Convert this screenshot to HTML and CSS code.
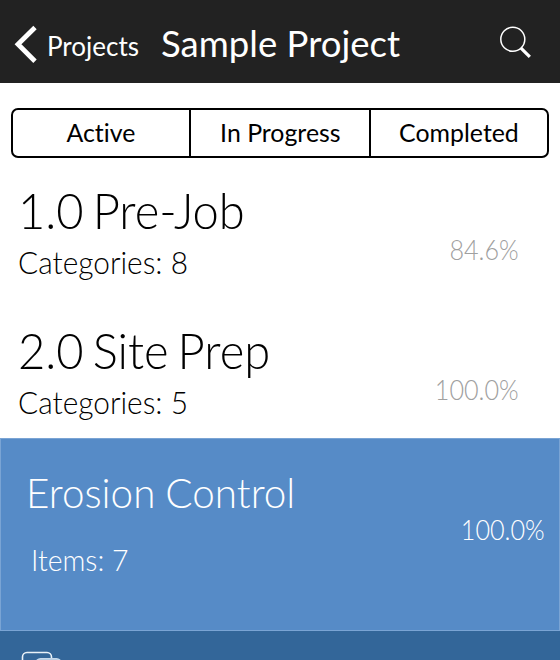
FILE: index.html
```html
<!DOCTYPE html>
<html lang="en">
<head>
<meta charset="utf-8">
<title>Sample Project</title>
<link rel="stylesheet" href="styles.css">
</head>
<body>
<header class="bar">
  <a class="back">
    <svg class="chevron" width="24" height="38" viewBox="0 0 24 38"><path d="M21 2.5 4 19.3l17 16.9" fill="none" stroke="#fff" stroke-width="4.8"/></svg>
    <span class="back-label">Projects</span>
  </a>
  <h1 class="title">Sample Project</h1>
  <svg class="search" width="34" height="34" viewBox="0 0 34 34" fill="none" stroke="#fff"><circle cx="14.8" cy="14.3" r="12" stroke-width="1.5"/><path d="m23 23.2 8.8 8.7" stroke-width="3.2"/></svg>
</header>
<nav class="segments">
  <span class="segment"><span>Active</span></span>
  <span class="segment"><span>In Progress</span></span>
  <span class="segment"><span>Completed</span></span>
</nav>
<main>
  <section class="row">
    <div>
      <h2 class="name">1.0 Pre-Job</h2>
      <p class="count">Categories: 8</p>
    </div>
    <span class="percent">84.6%</span>
  </section>
  <section class="row">
    <div>
      <h2 class="name">2.0 Site Prep</h2>
      <p class="count">Categories: 5</p>
    </div>
    <span class="percent">100.0%</span>
  </section>
  <section class="row selected">
    <div>
      <h2 class="name">Erosion Control</h2>
      <p class="count">Items: 7</p>
    </div>
    <span class="percent">100.0%</span>
  </section>
</main>
<footer class="toolbar">
  <svg width="44" height="28" viewBox="0 0 44 28" fill="none" stroke="#e9f1f8" stroke-width="1.6"><rect x="2.5" y="2.5" width="29" height="30" rx="4.5"/><rect x="16" y="8.8" width="25" height="26" rx="4.5" stroke="#c5d8ea" fill="#a9c5df"/></svg>
</footer>
</body>
</html>
```
FILE: styles.css
```css
* { box-sizing: border-box; margin: 0; padding: 0; }
body {
  width: 560px;
  height: 660px;
  overflow: hidden;
  background: #fff;
  color: #000;
  font-family: Lato, "Open Sans", sans-serif;
  font-weight: 300;
  font-variant-ligatures: none;
  white-space: nowrap;
}
h1, h2 { font-weight: inherit; }
.bar {
  display: flex;
  align-items: flex-start;
  height: 83px;
  padding: 0 28px 0 14px;
  background: #222;
  color: #fff;
}
.back { display: flex; width: 147px; }
.chevron { margin-top: 25px; }
.back-label { margin: 26px 0 0 9px; font-size: 26px; line-height: 40px; font-weight: 400; }
.title { margin-top: 18px; font-size: 36px; line-height: 50px; font-weight: 400; transform-origin: 0 50%; transform: scaleX(1.015); }
.search { margin: 25px 0 0 auto; }
.segments {
  display: grid;
  grid-template-columns: 176px 180px 1fr;
  height: 50px;
  margin: 25px 11px 0;
  border: 2px solid #000;
  border-radius: 7px;
}
.segment { text-align: center; font-size: 24.5px; line-height: 46px; font-weight: 400; }
.segment + .segment { border-left: 2px solid #000; }
.segment span { display: inline-block; transform: scaleX(1.015); }
.row {
  display: flex;
  justify-content: space-between;
  height: 140px;
  padding: 22px 41px 0 18px;
}
.name { font-size: 49px; line-height: 60px; word-spacing: -4px; transform-origin: 0 50%; transform: scaleX(.962); }
.count { margin-top: 2px; font-size: 31px; line-height: 40px; transform-origin: 0 50%; transform: scaleX(.963); }
.percent { margin-top: 50px; font-size: 27.5px; line-height: 40px; color: #a0a0a0; transform-origin: 100% 50%; transform: scaleX(.915); }
.selected {
  height: 193px;
  padding: 23px 14px 0 25px;
  background: #568bc7;
  border: 1px solid #7aa4d4;
  color: #fff;
}
.selected .name { font-size: 42px; word-spacing: -1px; }
.selected .count { margin: 18px 0 0 5px; font-size: 29.5px; }
.selected .percent { margin-top: 48px; color: #fff; }
.toolbar { height: 29px; padding: 19px 0 0 20px; background: #336699; overflow: hidden; }
```
